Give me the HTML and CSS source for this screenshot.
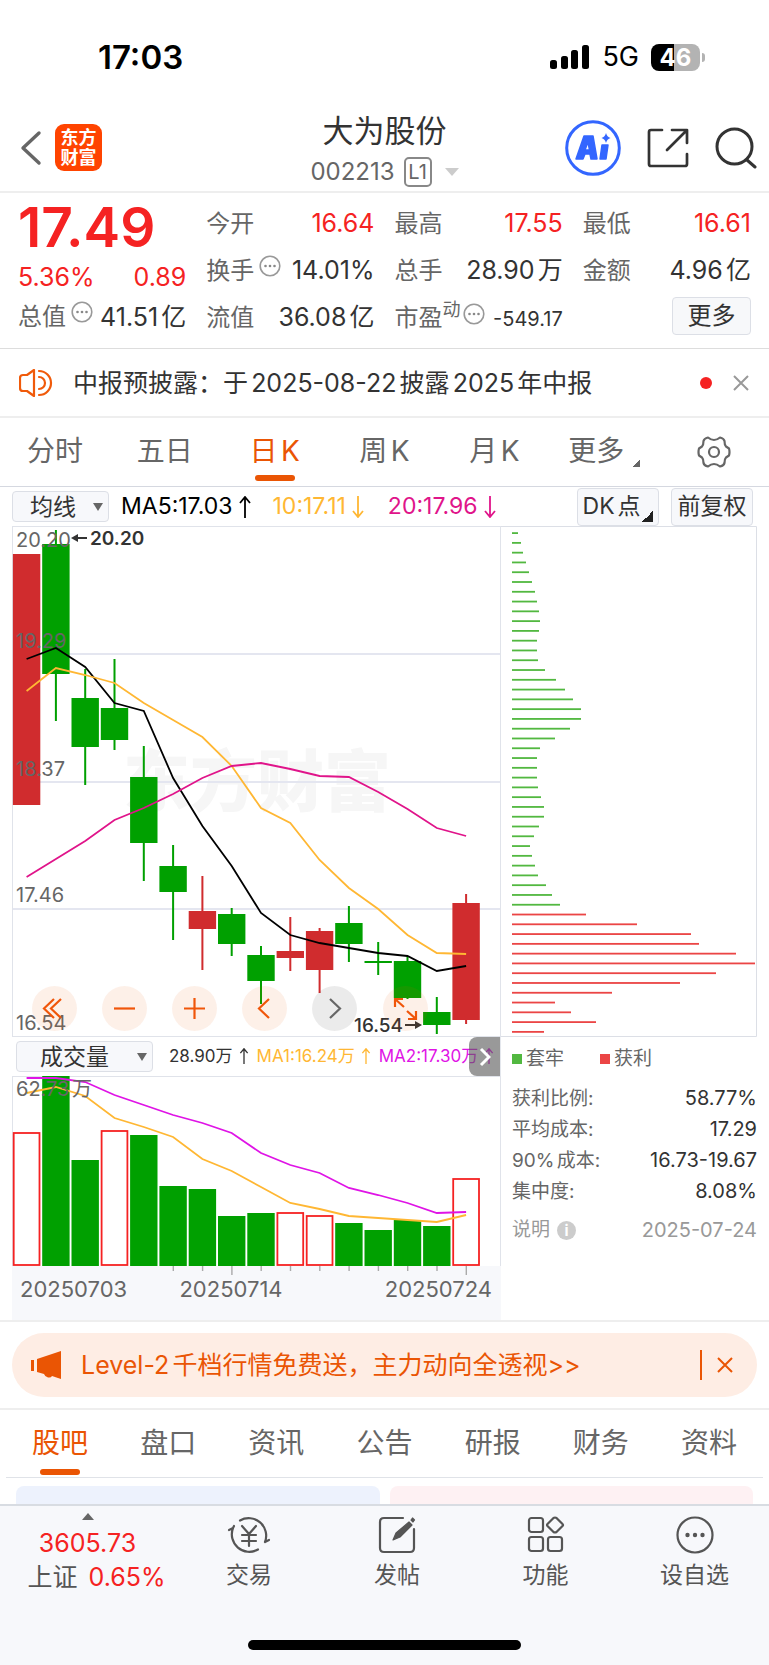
FILE: index.html
```html
<!DOCTYPE html>
<html lang="zh-CN">
<head>
<meta charset="utf-8">
<meta name="viewport" content="width=device-width, initial-scale=1">
<title>大为股份 002213</title>
<link rel="stylesheet" href="styles.css">
</head>
<body>
<div class="status">
  <span class="clock">17:03</span>
  <div class="status-right">
    <svg width="40" height="24" viewBox="0 0 40 24"><rect x="0" y="15" width="7" height="9" rx="2.5"/><rect x="11" y="11" width="7" height="13" rx="2.5"/><rect x="21" y="5" width="7" height="19" rx="2.5"/><rect x="32" y="0" width="7" height="24" rx="2.5"/></svg>
    <span class="net">5G</span>
    <span class="battery">46</span>
  </div>
</div>

<header class="header">
  <div class="header-left">
    <button class="icon-btn" aria-label="返回"><svg width="22" height="36" viewBox="0 0 22 36" fill="none" stroke="#666" stroke-width="3.4" stroke-linecap="round" stroke-linejoin="round"><path d="M19 3 3 18l16 15"/></svg></button>
    <div class="logo"><span>东方</span><span>财富</span></div>
  </div>
  <div class="title">
    <h1>大为股份</h1>
    <div class="code">002213 <span class="level">L1</span><i class="caret"></i></div>
  </div>
  <div class="header-right">
    <button class="icon-btn" aria-label="AI"><svg width="56" height="56" viewBox="0 0 56 56"><circle cx="28" cy="28" r="26.3" fill="#fff" stroke="#36f" stroke-width="3"/><g fill="#36f" stroke="#36f" stroke-linejoin="round"><path fill-rule="evenodd" stroke-width="1.5" d="M19 16h9l4 23h-6l-1-5h-5l-2 5h-7zM23 22l-3 8h4.500z"/><path stroke-width="1.500" d="M37 25h6l-2 14h-6z"/><path stroke="none" d="M41 13q1 4 4.500 5-3.500 1-4.500 5-1-4-4.500-5 3.500-1 4.500-5z"/></g></svg></button>
    <button class="icon-btn" aria-label="分享"><svg width="42" height="40" viewBox="0 0 42 40" fill="none" stroke="#333" stroke-width="2.700" stroke-linecap="round" stroke-linejoin="round"><path d="M15 2H4Q2 2 2 4v32q0 2 2 2h34q2 0 2-2V26M25 2h15v13M39 3 20 22"/></svg></button>
    <button class="icon-btn" aria-label="搜索"><svg width="42" height="42" viewBox="0 0 42 42" fill="none" stroke="#333" stroke-width="3" stroke-linecap="round"><circle cx="19.500" cy="19.500" r="17.500"/><path d="m32 33 8 7"/></svg></button>
  </div>
</header>

<section class="quote">
  <div class="col main-col">
    <strong class="price">17.49</strong>
    <div class="row up"><span>5.36%</span><span>0.89</span></div>
    <div class="row"><span class="label">总值</span><svg class="dots"><use href="#more"/></svg><span class="val">41.51亿</span></div>
  </div>
  <div class="col">
    <div class="row"><span class="label">今开</span><span class="val up">16.64</span></div>
    <div class="row"><span class="label">换手</span><svg class="dots"><use href="#more"/></svg><span class="val">14.01%</span></div>
    <div class="row"><span class="label">流值</span><span class="val">36.08亿</span></div>
  </div>
  <div class="col">
    <div class="row"><span class="label">最高</span><span class="val up">17.55</span></div>
    <div class="row"><span class="label">总手</span><span class="val">28.90万</span></div>
    <div class="row"><span class="label">市盈</span><span class="sup">动</span><svg class="dots"><use href="#more"/></svg><span class="val small">-549.17</span></div>
  </div>
  <div class="col">
    <div class="row"><span class="label">最低</span><span class="val up">16.61</span></div>
    <div class="row"><span class="label">金额</span><span class="val">4.96亿</span></div>
    <div class="row"><button class="more-btn">更多</button></div>
  </div>
</section>

<section class="notice">
  <svg width="34" height="28" viewBox="0 0 34 28" fill="none" stroke="#f05a0a" stroke-width="2.200" stroke-linecap="round" stroke-linejoin="round"><path d="M15 1v26l-7-5H4q-3 0-3-3V9q0-3 3-3h4zM20 2a12 12 0 0 1 0 24M20 8a6 6 0 0 1 0 12"/></svg>
  <p>中报预披露：于2025-08-22披露2025年中报</p>
  <i class="dot"></i>
  <button class="icon-btn" aria-label="关闭"><svg width="16" height="16" viewBox="0 0 16 16" stroke="#999" stroke-width="2"><path d="M1 1l14 14M15 1 1 15"/></svg></button>
</section>

<nav class="tabs periods">
  <button>分时</button><button>五日</button><button class="on">日K</button><button>周K</button><button>月K</button><button>更多<i class="corner"></i></button>
  <button aria-label="设置"><svg width="34" height="32" viewBox="0 0 34 32" fill="none" stroke="#666" stroke-width="2.200" stroke-linejoin="round"><path d="M11 1.500Q14 4 17 4t6-2.500q4 1 4.500 3.500 0 4 1.500 5.500l3 2q1 3.500 0 7l-3 2q-1.500 1.500-1.500 5.500-.5 2.500-4.500 3.500-3-2.500-6-2.500t-6 2.500q-4-1-4.500-3.500 0-4-1.500-5.500l-3-2q-1-3.500 0-7l3-2Q6.500 9 6.500 5 7 2.500 11 1.500z"/><circle cx="17" cy="16" r="5"/></svg></button>
</nav>

<div class="toolbar">
  <div class="pick"><select aria-label="主图指标"><option>均线</option></select></div>
  <span class="ma5">MA5:17.03<svg class="arrow"><use href="#up"/></svg></span>
  <span class="ma10">10:17.11<svg class="arrow"><use href="#down"/></svg></span>
  <span class="ma20">20:17.96<svg class="arrow"><use href="#down"/></svg></span>
  <button class="box-btn push">DK点<i class="corner dark"></i></button>
  <button class="box-btn">前复权</button>
</div>

<main class="charts">
  <div class="left">
    <div class="kline">
      <svg id="kline" class="plot" viewBox="0 0 489 511"></svg>
      <div class="zoom-bar">
        <button aria-label="最早"><svg viewBox="0 0 45 45"><path d="M22 13 12 22.500 22 32M29 13 19 22.500 29 32"/></svg></button>
        <button aria-label="缩小"><svg viewBox="0 0 45 45"><path d="M12 22.500h21"/></svg></button>
        <button aria-label="放大"><svg viewBox="0 0 45 45"><path d="M12 22.500h21M22.500 12v21"/></svg></button>
        <button aria-label="向左"><svg viewBox="0 0 45 45"><path d="M27 13 17 22.500 27 32"/></svg></button>
        <button class="off" aria-label="向右"><svg viewBox="0 0 45 45"><path d="M18 13 28 22.500 18 32"/></svg></button>
        <button aria-label="全屏"><svg viewBox="0 0 45 45"><path d="M12 21v-8h8M12 13l9 8M33 25v8h-8M33 33l-9-8"/></svg></button>
      </div>
    </div>
    <div class="vol-head">
      <div class="pick wide"><select aria-label="副图指标"><option>成交量</option></select></div>
      <span class="v0">28.90万<svg class="arrow"><use href="#up"/></svg></span>
      <span class="ma10">MA1:16.24万<svg class="arrow"><use href="#up"/></svg></span>
      <span class="v2">MA2:17.30万<svg class="arrow"><use href="#up"/></svg></span>
      <button class="next" aria-label="下一项"><svg width="12" height="20" viewBox="0 0 12 20" fill="none" stroke="#fff" stroke-width="3"><path d="m2 2 8 8-8 8"/></svg></button>
    </div>
    <svg id="volume" class="plot" viewBox="0 0 489 244"></svg>
  </div>
  <div class="right">
    <svg id="chips" class="plot" viewBox="0 0 256 511"></svg>
    <div class="legend"><span>套牢</span><span class="win">获利</span></div>
    <dl>
      <div><dt>获利比例<span>:</span></dt><dd>58.77%</dd></div>
      <div><dt>平均成本<span>:</span></dt><dd>17.29</dd></div>
      <div><dt>90%成本<span>:</span></dt><dd>16.73-19.67</dd></div>
      <div><dt>集中度<span>:</span></dt><dd>8.08%</dd></div>
    </dl>
    <div class="explain"><span>说明</span><i>i</i><time>2025-07-24</time></div>
  </div>
</main>

<section class="promo">
  <div class="pill">
    <svg width="32" height="28" viewBox="0 0 32 28" fill="#ea5504"><path d="M0 9h3v11H0zM6 8 30 0v28l-9-3q-1 2-4 1.500T13 23l-7-2z"/></svg>
    <a href="#level2">Level-2千档行情免费送，主力动向全透视&gt;&gt;</a>
    <button class="icon-btn" aria-label="关闭"><svg width="16" height="16" viewBox="0 0 16 16" stroke="#ea5504" stroke-width="2"><path d="M1 1l14 14M15 1 1 15"/></svg></button>
  </div>
</section>

<nav class="tabs sections">
  <button class="on">股吧</button><button>盘口</button><button>资讯</button><button>公告</button><button>研报</button><button>财务</button><button>资料</button>
</nav>
<div class="cards"><div class="card blue"></div><div class="card pink"></div></div>

<footer class="bottom">
  <div class="bottom-row">
    <button class="index"><i class="tri"></i><span class="up">3605.73</span><span class="idx">上证<b class="up">0.65%</b></span></button>
    <button><svg viewBox="0 0 44 40"><path d="M13 5.500A17.500 17.500 0 0 1 38 27M31 34.500A17.500 17.500 0 0 1 6 13M6 13l-4 2M6 13l1-2M38 27l4-2M15 11l7 8 7-8M22 19v12M15 20h14M15 26h14"/></svg>交易</button>
    <button><svg viewBox="0 0 44 40"><path d="M28 3H9q-4 0-4 4v26q0 4 4 4h26q4 0 4-4V14"/><path d="m18 25 3-7L34 7l3 3-12 12zM36 5l1.500-2 2 2L38 7z" fill="#555" stroke-width="1.200"/></svg>发帖</button>
    <button><svg viewBox="0 0 44 40"><rect x="5" y="3" width="14" height="14" rx="2.500"/><rect x="5" y="22" width="14" height="14" rx="2.500"/><rect x="24" y="22" width="14" height="14" rx="2.500"/><path d="m29.500 3-6 6q-1 1 0 2l6 6q1.500 1 3 0l6-6q1-1 0-2l-6-6q-1.500-1-3 0z"/></svg>功能</button>
    <button><svg viewBox="0 0 44 40"><circle cx="22" cy="20" r="17.500"/><g fill="#555" stroke="none"><circle cx="14.500" cy="20" r="2.200"/><circle cx="22" cy="20" r="2.200"/><circle cx="29.500" cy="20" r="2.200"/></g></svg>设自选</button>
  </div>
  <div class="home"></div>
</footer>

<svg class="defs" aria-hidden="true">
  <symbol id="more" viewBox="0 0 22 22"><circle cx="11" cy="11" r="9.800" fill="none" stroke="#999" stroke-width="1.600"/><g fill="#888"><circle cx="6.500" cy="11" r="1.300"/><circle cx="11" cy="11" r="1.300"/><circle cx="15.500" cy="11" r="1.300"/></g></symbol>
  <symbol id="up" viewBox="0 0 12 22"><path d="M6 22V1M1 7l5-6 5 6" fill="none" stroke="currentColor" stroke-width="1.800"/></symbol>
  <symbol id="down" viewBox="0 0 12 22"><path d="M6 0v21M1 15l5 6 5-6" fill="none" stroke="currentColor" stroke-width="1.800"/></symbol>
</svg>
<script src="chart.js"></script>
</body>
</html>
```

FILE: styles.css
```css
* { box-sizing: border-box; }
body {
  margin: 0;
  background: #fff;
  color: #333;
  font-family: Inter, "Noto Sans CJK SC", sans-serif;
  font-size: 24px;
  line-height: 1.2;
  text-autospace: normal;
}
button, select { font: inherit; color: inherit; background: none; border: 0; padding: 0; margin: 0; }
svg { display: block; flex: none; }
.defs { width: 0; height: 0; position: absolute; }
.up { color: #f52222; }
.icon-btn { display: flex; }

.status { display: flex; justify-content: space-between; align-items: center; height: 101px; padding: 14px 69px 0 98px; color: #000; }
.clock { font-size: 33px; font-weight: 600; }
.status-right { display: flex; align-items: center; gap: 12px; }
.net { font-size: 27px; font-weight: 400; }
.battery {
  position: relative;
  width: 49px; height: 27px; line-height: 27px;
  border-radius: 8px;
  background: linear-gradient(90deg, #000 46%, #b3b3b3 46%);
  color: #fff; font-size: 24px; font-weight: 700; text-align: center;
}
.battery::after { content: ""; position: absolute; left: 51px; top: 9px; width: 3px; height: 9px; border-radius: 0 3px 3px 0; background: #b3b3b3; }

.header { display: grid; grid-template-columns: 1fr auto 1fr; align-items: center; height: 92px; padding: 2px 12px 0; border-bottom: 2px solid #eee; }
.header-left, .header-right { display: flex; align-items: center; }
.header-left { gap: 13px; padding-left: 8px; }
.header-right { justify-content: flex-end; gap: 26px; }
.logo { display: grid; align-content: center; justify-items: center; width: 47px; height: 47px; border-radius: 9px; background: #ff4400; color: #fff; font-size: 18px; line-height: 20px; font-weight: 700; }
.title { padding-top: 7px; }
h1 { margin: 0; font-size: 31px; line-height: 42px; font-weight: 400; text-align: center; }
.code { display: flex; align-items: center; justify-content: center; height: 40px; font-size: 24px; color: #666; }
.level { margin-left: 9px; width: 28px; height: 30px; line-height: 26px; border: 2px solid #888; border-radius: 5px; font-size: 20px; text-align: center; }
.caret { margin-left: 13px; border: 7px solid transparent; border-top: 8px solid #ccc; border-bottom: 0; }

.quote { display: grid; grid-template-columns: repeat(4, 1fr); column-gap: 20px; padding: 4px 18px; border-bottom: 1px solid #ddd; }
.col { padding-top: 3px; }
.row { display: flex; justify-content: space-between; line-height: 47px; white-space: nowrap; }
.main-col { padding: 0; }
.main-col .row { line-height: 40px; }
.main-col .row.up { font-size: 25px; }
.price { display: block; font-size: 55px; line-height: 60px; font-weight: 600; color: #f52222; }
.label { color: #666; }
.val { font-size: 25px; }
.dots { width: 22px; height: 22px; align-self: center; margin: 0 4px 10px 5px; }
.label + .val, .dots + .val { margin-left: auto; }
.sup { font-size: 18px; line-height: 32px; color: #666; }
.sup + .dots { margin-left: 2px; }
.small { font-size: 20px; line-height: 50px; }
.more-btn { margin: 3px 0 0 auto; width: 79px; height: 38px; line-height: 36px; border: 1px solid #dcdfe6; border-radius: 4px; background: #f7f8fa; }

.notice { display: flex; align-items: center; height: 69px; padding: 0 20px 0 19px; border-bottom: 2px solid #eee; }
.notice p { flex: 1; margin: 0 0 0 20px; font-size: 25px; }
.dot { width: 12px; height: 12px; margin-right: 21px; border-radius: 50%; background: #f52222; }

.tabs { display: grid; grid-template-columns: repeat(7, 1fr); font-size: 28px; color: #666; }
.tabs button { display: flex; align-items: center; justify-content: center; position: relative; }
.tabs .on { color: #ea5504; }
.tabs .on::after { content: ""; position: absolute; bottom: 5px; left: calc(50% - 20px); width: 40px; height: 6px; border-radius: 3px; background: #ea5504; }
.periods { height: 69px; border-bottom: 1px solid #d5d8e0; }
.corner { align-self: flex-end; width: 7px; height: 8px; margin: 0 0 19px 9px; background: linear-gradient(to bottom right, transparent 50%, #666 50%); }
.corner.dark { margin: 0 0 3px 2px; width: 11px; height: 11px; background: linear-gradient(to bottom right, transparent 50%, #222 50%); }

.toolbar { display: flex; align-items: center; height: 39px; padding: 0 16px 0 12px; font-size: 23px; white-space: nowrap; }
.pick { position: relative; flex: none; }
.pick::after { content: ""; position: absolute; right: 6px; top: 12px; border: 5px solid transparent; border-top: 8px solid #666; border-bottom: 0; pointer-events: none; }
.pick select { appearance: none; display: block; width: 97px; height: 31px; padding-left: 17px; border: 1px solid #dcdfe6; border-radius: 4px; background: #f7f8fb; font-size: 23px; line-height: 28px; }
.pick.wide select { width: 137px; padding-left: 23px; }
.pick + span { margin-left: 12px; }
.toolbar span, .vol-head span { display: flex; align-items: center; }
.arrow { width: 12px; height: 22px; margin-left: 6px; }
.ma5 { color: #000; }
.ma10 { color: #ffb733; margin-left: 22px; }
.ma20 { color: #e0148a; margin-left: 24px; }
.box-btn { display: flex; align-items: center; justify-content: center; width: 82px; height: 38px; border: 1px solid #dcdfe6; border-radius: 4px; background: #f7f8fb; }
.push { margin: 0 12px 0 auto; }

.charts { display: grid; grid-template-columns: minmax(0, 489fr) minmax(0, 256fr); padding: 0 12px; border-bottom: 2px solid #eee; }
.plot { width: 100%; height: auto; }
.kline { position: relative; }
.zoom-bar { position: absolute; left: 4%; right: 15%; bottom: 6px; display: flex; justify-content: space-between; }
.zoom-bar button { width: 45px; height: 45px; border-radius: 50%; background: rgba(234, 85, 4, .09); }
.zoom-bar .off { background: rgba(0, 0, 0, .08); }
.zoom-bar path { fill: none; stroke: #f0560a; stroke-width: 2.2; }
.zoom-bar .off path { stroke: #666; }
.vol-head { position: relative; display: flex; align-items: center; height: 39px; padding-left: 4px; font-size: 17px; white-space: nowrap; border-right: 1px solid #e4e7ed; text-autospace: no-autospace; }
.vol-head .pick + span { margin-left: 16px; }
.vol-head .arrow { width: 10px; height: 16px; margin-left: 6px; }
.vol-head .ma10, .v2 { margin-left: 8px; }
.v2 { color: #df14e6; }
.next { position: absolute; right: 0; top: 0; bottom: 0; display: flex; align-items: center; justify-content: center; width: 31px; border-radius: 8px 0 0 8px; background: rgba(90, 90, 90, .62); }

.right { color: #666; font-size: 19px; }
.legend { display: flex; padding: 7px 0 0 11px; line-height: 30px; }
.legend span { display: flex; align-items: center; width: 88px; gap: 4px; }
.legend span::before { content: ""; width: 10px; height: 10px; background: #52b840; }
.legend .win::before { background: #eb4545; }
dl { margin: 9px 0 0 11px; }
dl div { display: flex; justify-content: space-between; line-height: 31px; }
dt span { display: inline-block; }
dd { margin: 0; color: #333; font-size: 20px; }
.explain { display: flex; align-items: center; margin: 8px 0 0 11px; line-height: 30px; color: #999; }
.explain i { width: 19px; height: 19px; margin-left: 7px; border-radius: 50%; background: #ccc; color: #fff; font-size: 15px; line-height: 19px; font-style: normal; font-weight: 700; text-align: center; }
.explain time { margin-left: auto; font-size: 20px; }

.promo { padding: 11px 12px; border-bottom: 2px solid #eee; }
.pill { display: flex; align-items: center; height: 64px; padding: 0 24px 0 19px; border-radius: 32px; background: #feede4; color: #ea5504; font-size: 25px; }
.pill a { flex: 1; margin-left: 18px; color: inherit; text-decoration: none; }
.pill .icon-btn { align-items: center; height: 30px; padding-left: 15px; border-left: 2px solid #ea5504; }
.sections { height: 68px; margin: 0 6px; border-bottom: 1px solid #e0e3e8; }
.sections .on::after { bottom: 2px; }
.cards { display: grid; grid-template-columns: 1fr 1fr; gap: 10px; padding: 8px 16px 0; }
.card { height: 18px; border-radius: 8px 8px 0 0; }
.blue { background: #edf2fd; }
.pink { background: #fef1f3; }

.bottom { height: 162px; border-top: 2px solid #d8dce2; background: #f7f8fb; }
.bottom-row { display: grid; grid-template-columns: 175fr 148fr 148fr 149fr 149fr; height: 134px; }
.bottom button { display: flex; flex-direction: column; align-items: center; padding-top: 9px; font-size: 23px; line-height: 40px; color: #555; }
.bottom svg { width: 44px; height: 40px; fill: none; stroke: #555; stroke-width: 2.2; stroke-linecap: round; stroke-linejoin: round; }
.bottom .index { padding-top: 7px; font-size: 25px; line-height: 34px; }
.index .up { font-weight: 400; }
.index > .up { margin-top: 6px; }
.index .idx { display: flex; gap: 11px; padding-left: 18px; }
.tri { border: 6px solid transparent; border-bottom: 7px solid #666; border-top: 0; }
.home { width: 273px; height: 10px; margin: 0 auto; border-radius: 5px; background: #000; }
```

FILE: chart.js
```js
const NS = 'http://www.w3.org/2000/svg';
const GREEN = '#00a000';
const RED = '#d02c2e';
const STEP = 29.3;
const FIRST = 14.6;
const centre = i => FIRST + STEP * i;

function add(id, tag, attrs, text) {
  const el = document.createElementNS(NS, tag);
  for (const k in attrs) el.setAttribute(k, attrs[k]);
  if (text) el.textContent = text;
  document.getElementById(id).appendChild(el);
}
function line(id, ys, stroke) {
  add(id, 'polyline', { points: ys.map((y, i) => centre(i) + ',' + y).join(' '), fill: 'none', stroke, 'stroke-width': 1.8 });
}
function label(id, x, y, text, extra) {
  add(id, 'text', { x, y, 'font-size': 20, fill: '#666', ...extra }, text);
}

// Daily candles: body top, body bottom, high, low, rising
const candles = [
  [28, 279, 28, 279, 1], [18, 148, 4, 195, 0], [172, 221, 143, 259, 0], [182, 214, 133, 224, 0],
  [251, 317, 220, 355, 0], [340, 366, 319, 414, 0], [385, 403, 350, 444, 1], [388, 418, 382, 430, 0],
  [429, 455, 420, 478, 0], [425, 432, 391, 445, 1], [405, 444, 402, 467, 1], [397, 418, 380, 436, 0],
  [435, 437, 416, 449, 0], [435, 472, 430, 473, 0], [486, 499, 471, 508, 0], [377, 494, 368, 498, 1]
];
add('kline', 'rect', { x: .5, y: .5, width: 488, height: 510, fill: '#fff', stroke: '#e0e3ea' });
add('kline', 'text', { x: 245, y: 280, 'font-size': 67, 'font-weight': 900, fill: '#f6f6f6', 'text-anchor': 'middle' }, '东方财富');
[128, 256, 383].forEach(y => add('kline', 'path', { d: `M1 ${y}H488`, stroke: '#e4e6f0', 'stroke-width': 2 }));
candles.forEach(([top, bottom, high, low, rising], i) => {
  const fill = rising ? RED : GREEN;
  add('kline', 'rect', { x: centre(i) - 1, y: high, width: 2, height: low - high, fill });
  add('kline', 'rect', { x: centre(i) - 13.7, y: top, width: 27.4, height: bottom - top, fill });
});
line('kline', [133, 122, 141, 177, 185, 252, 300, 340, 387, 409, 417, 422, 427, 430, 445, 440], '#000');
line('kline', [165, 142, 149, 157, 177, 194, 211, 240, 282, 297, 334, 362, 383, 409, 427, 428], '#ffb733');
line('kline', [351, 333, 315, 294, 282, 268, 252, 240, 237, 243, 250, 251, 266, 283, 302, 310], '#e0148a');
[['20.20', 21], ['19.29', 122], ['18.37', 250], ['17.46', 376], ['16.54', 504]].forEach(([t, y]) => label('kline', 4, y, t));
label('kline', 78, 19, '20.20', { fill: '#333', 'font-weight': 600, 'font-size': 19 });
label('kline', 342, 506, '16.54', { fill: '#333', 'font-weight': 500, 'font-size': 19 });
add('kline', 'path', { d: 'M75 12H61M393 499h14', stroke: '#333', 'stroke-width': 2 });
add('kline', 'path', { d: 'M59 12l7-4v8zM410 499l-7-4v8z', fill: '#333' });

// Volume: bar top, rising
const volume = [
  [56, 1], [0, 0], [84, 0], [54, 1], [59, 0], [110, 0], [113, 0], [140, 0],
  [137, 0], [136, 1], [139, 1], [147, 0], [154, 0], [144, 0], [150, 0], [102, 1]
];
add('volume', 'rect', { x: .5, y: .5, width: 488, height: 190, fill: '#fff', stroke: '#e0e3ea' });
add('volume', 'rect', { x: 0, y: 190, width: 489, height: 54, fill: '#f7f8fb' });
volume.forEach(([top, rising], i) => {
  if (rising) add('volume', 'rect', { x: centre(i) - 12.9, y: top + 1, width: 25.8, height: 188 - top, fill: '#fff', stroke: '#f52222', 'stroke-width': 1.8 });
  else add('volume', 'rect', { x: centre(i) - 13.7, y: top, width: 27.4, height: 190 - top, fill: GREEN });
  if (i > 4) add('volume', 'rect', { x: centre(i) - .5, y: 190, width: 1.4, height: i === 7 || i === 15 ? 9 : 5, fill: '#aaa' });
});
line('volume', [17, 11, 20, 42, 51, 61, 83, 95, 111, 127, 133, 140, 142, 144, 146, 139], '#ffb733');
line('volume', [2, 2, 6, 19, 29, 39, 47, 57, 77, 89, 97, 112, 119, 127, 137, 136], '#df14e6');
label('volume', 4, 20, '62.73万');
label('volume', 8, 221, '20250703', { 'font-size': 22 });
label('volume', 219, 221, '20250714', { 'font-size': 22, 'text-anchor': 'middle' });
label('volume', 480, 221, '20250724', { 'font-size': 22, 'text-anchor': 'end' });

// Cost distribution, highest price first
const trapped = [6, 9, 11, 14, 17, 20, 23, 25, 27, 28, 27, 25, 25, 26, 33, 44, 53, 61, 69, 69, 58, 43, 28, 25, 25, 25, 26, 29, 32, 32, 27, 22, 18, 20, 23, 26, 34, 40, 48];
const profit = [74, 125, 179, 187, 224, 243, 204, 168, 100, 43, 59, 84, 32];
add('chips', 'path', { d: 'M0 .5H255.500V510.500H0', fill: 'none', stroke: '#dcdfe6' });
[...trapped, ...profit].forEach((width, i) => add('chips', 'rect', {
  x: 11, y: 6.2 + i * 9.78, width, height: 1.8, fill: i < trapped.length ? '#52b840' : '#eb4545'
}));
```
